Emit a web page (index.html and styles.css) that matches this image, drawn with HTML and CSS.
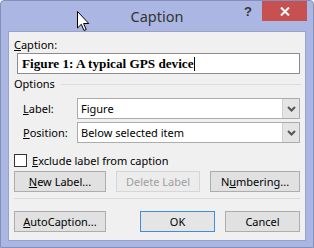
FILE: index.html
```html
<!DOCTYPE html>
<html>
<head>
<meta charset="utf-8">
<link rel="stylesheet" href="styles.css">
</head>
<body>
<div class="window">
  <div class="titlebar">
    <div></div>
    <div class="title">Caption</div>
    <div class="controls">
      <span class="help">?</span>
      <span class="close"><svg width="10" height="9" viewBox="0 0 10 9"><path d="M1 0.5 L9 8.5 M9 0.5 L1 8.5" stroke="#fff" stroke-width="2"/></svg></span>
    </div>
  </div>
  <svg class="cursor" width="13" height="21" viewBox="0 0 13 21"><path d="M0.5 0.5 L0.5 17 L4.3 13.3 L7 19.5 L9.2 18.5 L6.6 12.5 L11.8 12.5 Z" fill="#fff" stroke="#000" stroke-width="1" stroke-linejoin="miter"/></svg>
  <div class="content">
    <div class="lbl"><u>C</u>aption:</div>
    <div class="textbox"><span class="caption-text">Figure 1: A typical GPS device</span><span class="caret"></span></div>
    <div class="group-head"><span>Options</span><span class="group-line"></span></div>
    <div class="row first">
      <span class="row-label"><u>L</u>abel:</span>
      <div class="combo"><span class="combo-val">Figure</span><span class="combo-btn"><svg width="9" height="6" viewBox="0 0 9 6"><path d="M1 1 L4.5 4.5 L8 1" fill="none" stroke="#555" stroke-width="2"/></svg></span></div>
    </div>
    <div class="row">
      <span class="row-label"><u>P</u>osition:</span>
      <div class="combo"><span class="combo-val">Below selected item</span><span class="combo-btn"><svg width="9" height="6" viewBox="0 0 9 6"><path d="M1 1 L4.5 4.5 L8 1" fill="none" stroke="#555" stroke-width="2"/></svg></span></div>
    </div>
    <div class="check-row"><span class="checkbox"></span><span><u>E</u>xclude label from caption</span></div>
    <div class="btn-row">
      <span class="btn w92"><u>N</u>ew Label...</span>
      <span class="btn w84 disabled">Delete Label</span>
      <span class="btn w90">N<u>u</u>mbering...</span>
    </div>
    <div class="sep"></div>
    <div class="btn-row bottom">
      <span class="btn w92"><u>A</u>utoCaption...</span>
      <div class="btn-group">
        <span class="btn w75 default">OK</span>
        <span class="btn w75">Cancel</span>
      </div>
    </div>
  </div>
</div>
</body>
</html>
```

FILE: styles.css
```css
* { box-sizing: border-box; }
html, body { margin: 0; padding: 0; }
body {
  width: 314px;
  height: 248px;
  background: #ffffff;
  font-family: "Noto Sans", "Open Sans", sans-serif;
  font-size: 11px;
  color: #000;
  overflow: hidden;
}
.window {
  position: relative;
  width: 314px;
  height: 248px;
  background: #abb7e2;
  border: 1px solid #8590ba;
  border-radius: 4px 4px 0 0;
  padding: 0 7px 6px 7px;
}
.titlebar {
  height: 30px;
  display: grid;
  grid-template-columns: 1fr auto 1fr;
  margin: 0 -7px 0 -7px;
}
.title {
  font-size: 14.5px;
  color: #333;
  line-height: 30px;
}
.controls {
  display: flex;
  justify-content: flex-end;
  align-items: flex-start;
  padding-right: 6px;
}
.help {
  font-weight: bold;
  font-size: 13px;
  color: #333;
  margin-top: 3px;
  margin-right: 10px;
  font-family: "Liberation Sans", sans-serif;
}
.close {
  width: 45px;
  height: 20px;
  background: #c75050;
  display: flex;
  align-items: center;
  justify-content: center;
}
.cursor {
  position: absolute;
  left: 76px;
  top: 10px;
}
.content {
  height: 210px;
  background: #f0f0f0;
  border: 1px solid #9aa2c6;
  padding: 6px 5px 0 5px;
}
.lbl {
  line-height: 14px;
  height: 14px;
}
.textbox {
  margin: 1px 0 0 3px;
  height: 21px;
  background: #fff;
  border: 1px solid #8c8c8c;
  display: flex;
  align-items: center;
  padding-left: 4px;
}
.caption-text {
  font-family: "Liberation Serif", serif;
  font-weight: bold;
  font-size: 13.2px;
}
.caret {
  width: 1px;
  height: 14px;
  background: #000;
}
.group-head {
  margin-top: 3px;
  display: flex;
  align-items: center;
  line-height: 14px;
  height: 14px;
}
.group-line {
  flex: 1;
  height: 1px;
  background: #dcdcdc;
  margin-left: 6px;
  margin-right: -2px;
}
.row {
  display: flex;
  align-items: center;
  padding-left: 9px;
  margin-top: 3px;
}
.row.first { margin-top: 7px; }
.row-label { width: 54px; }
.combo {
  flex: 1;
  height: 21px;
  background: #fff;
  border: 1px solid #acacac;
  display: flex;
  align-items: stretch;
}
.combo-val {
  flex: 1;
  padding-left: 3px;
  line-height: 19px;
}
.combo-btn {
  width: 17px;
  background: #e4e4e4;
  border-left: 1px solid #d0d0d0;
  display: flex;
  align-items: center;
  justify-content: center;
}
.check-row {
  margin-top: 11px;
  display: flex;
  align-items: center;
  height: 13px;
}
.checkbox {
  width: 13px;
  height: 13px;
  background: #fff;
  border: 1px solid #333;
  margin-right: 5px;
}
.btn-row {
  display: flex;
  gap: 10px;
  margin-top: 4px;
}
.btn-row.bottom {
  margin-top: 12px;
  justify-content: space-between;
}
.btn-group { display: flex; gap: 10px; }
.btn {
  height: 21px;
  background: #e1e1e1;
  border: 1px solid #adadad;
  display: flex;
  align-items: center;
  justify-content: center;
}
.btn.disabled {
  color: #a0a0a0;
  background: #ececec;
  border-color: #d6d6d6;
}
.btn.default { border-color: #3c8fe0; background: #e5e5e5; }
.w92 { width: 92px; }
.w84 { width: 84px; }
.w90 { width: 90px; }
.w75 { width: 75px; }
.sep {
  margin-top: 6px;
  height: 1px;
  background: #d9d9d9;
}
u { text-decoration: underline; text-underline-offset: 1px; }
```
